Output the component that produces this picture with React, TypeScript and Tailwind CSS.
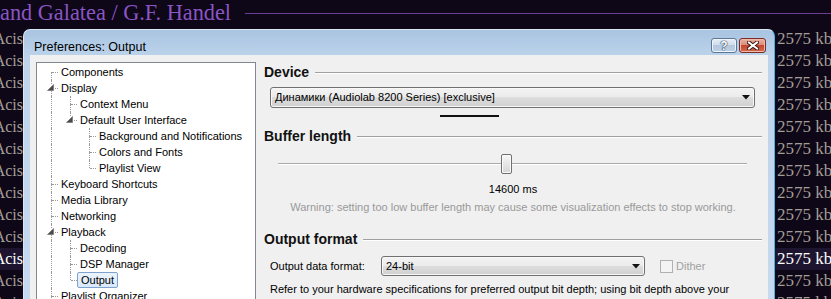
import * as React from 'react';

type TreeItem = { label: string; level: number; expanded?: boolean; selected?: boolean };

const treeItems: TreeItem[] = [
  { label: 'Components', level: 0 },
  { label: 'Display', level: 0, expanded: true },
  { label: 'Context Menu', level: 1 },
  { label: 'Default User Interface', level: 1, expanded: true },
  { label: 'Background and Notifications', level: 2 },
  { label: 'Colors and Fonts', level: 2 },
  { label: 'Playlist View', level: 2 },
  { label: 'Keyboard Shortcuts', level: 0 },
  { label: 'Media Library', level: 0 },
  { label: 'Networking', level: 0 },
  { label: 'Playback', level: 0, expanded: true },
  { label: 'Decoding', level: 1 },
  { label: 'DSP Manager', level: 1 },
  { label: 'Output', level: 1, selected: true },
  { label: 'Playlist Organizer', level: 0 },
  { label: 'Shell Integration', level: 0 },
  { label: 'Tools', level: 0 },
];

const hasNextSibling = (i: number) => {
  for (let j = i + 1; j < treeItems.length; j++) {
    if (treeItems[j].level < treeItems[i].level) return false;
    if (treeItems[j].level === treeItems[i].level) return true;
  }
  return false;
};

const ancestorAt = (i: number, level: number) => {
  for (let k = i - 1; k >= 0; k--) if (treeItems[k].level === level) return k;
  return -1;
};

const dotV = 'absolute left-[9px] border-l border-dotted border-[#9a9a9a]';

const TreeRow: React.FC<{ item: TreeItem; index: number }> = ({ item, index }) => {
  const guides = Array.from({ length: item.level }, (_, l) => hasNextSibling(ancestorAt(index, l)));
  return (
    <div className="flex h-4 items-stretch">
      {guides.map((g, l) => (
        <div key={l} className="relative w-[19px] shrink-0">
          {g && <div className={`${dotV} top-0 bottom-0`} />}
        </div>
      ))}
      <div className="relative w-4 shrink-0">
        {index > 0 && <div className={`${dotV} top-0 h-[8px]`} />}
        {hasNextSibling(index) && <div className={`${dotV} top-[8px] bottom-0`} />}
        <div className="absolute left-[10px] right-0 top-[8px] border-t border-dotted border-[#9a9a9a]" />
        {item.expanded && (
          <div className="absolute left-[5px] top-[4px] w-[7px] h-[7px] bg-white">
            <svg width="7" height="7" viewBox="0 0 7 7">
              <path d="M6.5 0.5 L6.5 6.5 L0.5 6.5 Z" fill="#4a4a4a" stroke="#6a6a6a" strokeWidth="0.6" />
            </svg>
          </div>
        )}
      </div>
      <span
        className={
          item.selected
            ? 'px-[3px] leading-[14px] border border-[#7da2ce] rounded-[2px] bg-[linear-gradient(#ebf4fd,#d9e9fc)] whitespace-nowrap'
            : 'px-[3px] leading-4 whitespace-nowrap'
        }
      >
        {item.label}
      </span>
    </div>
  );
};

const SectionHeading: React.FC<{ title: string; className?: string }> = ({ title, className }) => (
  <div className={`flex h-4 items-center ${className ?? ''}`}>
    <span className="text-[14px] font-bold leading-4 text-[#111]">{title}</span>
    <div className="flex-1 ml-[6px] mt-[2px] h-[2px] border-t border-[#a0a0a0] bg-white" />
  </div>
);

const ComboArrow = () => (
  <svg width="8" height="5" viewBox="0 0 8 5" className="shrink-0">
    <path d="M0 0 L8 0 L4 4.5 Z" fill="#111" />
  </svg>
);

const comboBox =
  'flex items-center justify-between border border-[#707070] rounded-[3px] shadow-[inset_0_0_0_1px_#f8f8f8] bg-[linear-gradient(#f3f3f3,#ebebeb_50%,#dddddd_50%,#d0d0d0)]';

const rowsLeft = Array.from({ length: 13 }, (_, i) => i);

const App: React.FC = () => {
  return (
    <div className="w-[831px] h-[299px] overflow-hidden bg-[#0d0717] font-['Liberation_Sans',Arial,sans-serif] text-[11px] text-black">
      {/* now playing header */}
      <div className="h-[28px] flex items-start">
        <span className="font-['Liberation_Serif',serif] text-[22.3px] leading-[26px] text-[#8a55c4] whitespace-nowrap">
          and Galatea / G.F. Handel
        </span>
        <div className="flex-1 ml-[14px] mt-[13px] h-px bg-[#6b3d93]" />
      </div>

      <div className="flex">
        {/* playlist column, left */}
        <div className="w-[23px] shrink-0 overflow-hidden font-['Liberation_Serif',serif] text-[16px]">
          {rowsLeft.map((i) => (
            <div
              key={i}
              className={`h-[22px] flex items-center justify-end whitespace-nowrap ${
                i === 10 ? 'bg-[#1d1530] text-white' : 'text-[#a59e96]'
              }`}
            >
              Acis
            </div>
          ))}
        </div>

        {/* dialog */}
        <div className="w-[752px] h-[290px] mt-px shrink-0 flex flex-col rounded-t-[7px] border border-[#dce7f3] border-r-[#47b3dc] px-[6px] bg-[linear-gradient(180deg,#a9c4e1_0%,#bed4ec_10%,#c6daf0_100%)]">
          <div className="h-[29px] flex items-start justify-between">
            <span className="mt-[9px] pl-[4px] text-[12.5px] leading-4 text-black">Preferences: Output</span>
            <div className="flex gap-[2px] mt-[8px] pr-[2px]">
              <div className="w-[26px] h-[15px] flex items-center justify-center rounded-[3px] border border-[#5d7896] shadow-[inset_0_0_0_1px_#eef4fa] bg-[linear-gradient(#e6eef7,#cbdaeb_50%,#b3c7de_50%,#bcd0e6)]">
                <span className="text-[12px] font-bold leading-none text-white [text-shadow:0_0_1px_#23324a,0_0_1px_#23324a,0_0_1px_#23324a]">
                  ?
                </span>
              </div>
              <div className="w-[27px] h-[15px] flex items-center justify-center rounded-[3px] border border-[#7b2f24] shadow-[inset_0_0_0_1px_#efb9ac] bg-[linear-gradient(#eab0a2,#d98a77_50%,#c5452f_50%,#d36a4f)]">
                <svg width="12" height="9" viewBox="0 0 12 9">
                  <path d="M2 1.5 L10 7.5 M10 1.5 L2 7.5" stroke="#3b1710" strokeWidth="4" strokeLinecap="square" />
                  <path d="M2 1.5 L10 7.5 M10 1.5 L2 7.5" stroke="#ffffff" strokeWidth="2" strokeLinecap="square" />
                </svg>
              </div>
            </div>
          </div>

          {/* client area */}
          <div className="flex-1 flex bg-[#f0f0f0] pt-[7px] pl-[6px] pr-[6px] gap-[8px]">
            <div className="w-[220px] shrink-0 border border-[#828790] bg-white pt-px pl-[5px] overflow-hidden">
              {treeItems.map((item, i) => (
                <TreeRow key={item.label} item={item} index={i} />
              ))}
            </div>

            <div className="flex-1 flex flex-col">
              <SectionHeading title="Device" className="mt-[2px]" />
              <div className={`${comboBox} ml-[6px] mt-[7px] w-[485px] h-[21px] pl-[4px] pr-[4px]`}>
                <span className="whitespace-nowrap">Динамики (Audiolab 8200 Series) [exclusive]</span>
                <ComboArrow />
              </div>
              <div className="ml-[176px] mt-[7px] w-[59px] h-[2px] bg-[#111]" />

              <SectionHeading title="Buffer length" className="mt-[11px]" />
              <div className="relative ml-[14px] mt-[10px] w-[469px] h-[20px] flex items-center">
                <div className="w-full h-[2px] border-t border-[#aaaaaa] bg-white" />
                <div className="absolute left-[223px] top-0 w-[11px] h-[20px] rounded-[2px] border border-[#707070] shadow-[inset_0_0_0_1px_#fafafa] bg-[linear-gradient(#f7f7f7,#e6e6e6_50%,#d6d6d6)]" />
              </div>
              <div className="mt-[7px] h-4 leading-4 text-center">14600 ms</div>
              <div className="mt-[2px] h-4 leading-4 text-center text-[#999999] whitespace-nowrap">
                Warning: setting too low buffer length may cause some visualization effects to stop working.
              </div>

              <SectionHeading title="Output format" className="mt-[16px]" />
              <div className="ml-[6px] mt-[9px] h-[20px] flex items-center">
                <span className="w-[111px] shrink-0">Output data format:</span>
                <div className={`${comboBox} w-[264px] h-[20px] pl-[4px] pr-[4px]`}>
                  <span>24-bit</span>
                  <ComboArrow />
                </div>
                <div className="ml-[15px] w-[13px] h-[13px] border border-[#b1b1b1] bg-[#f4f4f4]" />
                <span className="ml-[3px] text-[#a0a0a0]">Dither</span>
              </div>
              <div className="ml-[6px] mt-[5px] h-4 leading-4 whitespace-nowrap">
                Refer to your hardware specifications for preferred output bit depth; using bit depth above your
              </div>
            </div>
          </div>
        </div>

        {/* playlist column, right */}
        <div className="flex-1 overflow-hidden font-['Liberation_Serif',serif] text-[17px]">
          {rowsLeft.map((i) => (
            <div
              key={i}
              className={`h-[22px] flex items-center pl-[2px] whitespace-nowrap ${
                i === 10 ? 'bg-[#1d1530] text-white' : 'text-[#a59e96]'
              }`}
            >
              2575 kb
            </div>
          ))}
        </div>
      </div>
    </div>
  );
};

export default App;
